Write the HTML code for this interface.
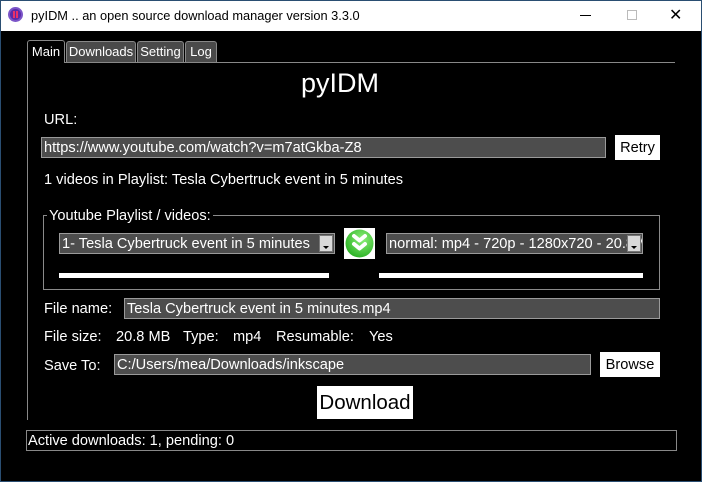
<!DOCTYPE html><html><head><style>
*{margin:0;padding:0;box-sizing:border-box}
body{width:702px;height:482px;background:#000;position:relative;overflow:hidden;font-family:"Liberation Sans",sans-serif;color:#fff;font-size:14.6px}
.a{position:absolute;white-space:nowrap}
.in{position:absolute;background:#4d4d4d;border:1px solid #9a9a9a;color:#fff;padding-left:2px;line-height:20px;font-size:14.6px;overflow:hidden;white-space:nowrap}
.btn{position:absolute;background:#fff;color:#000;text-align:center}
.tab{position:absolute;top:41px;height:21px;background:#4a4a4a;border:1px solid #888;border-bottom:none;border-radius:3px 3px 0 0;font-size:13px;line-height:20px;text-align:center;color:#fff}
.dd{position:absolute;right:1px;top:1px;width:14px;height:17px;background:#d9d9d9;border:1px solid #777}
.dd:after{content:"";position:absolute;left:3px;top:10px;border:3px solid transparent;border-top:3px solid #000}
</style></head><body>
<div class="a" style="left:0;top:0;width:702px;height:31px;background:#fff;border:1px solid #2a4e72;border-bottom:none"></div>
<div class="a" style="left:8px;top:7px;width:15px;height:15px;border-radius:50%;background:#5a2aa8;border:2px solid #7b55c8"></div>
<div class="a" style="left:13px;top:11px;width:5px;height:7px;border-left:2px solid #e8306a;border-right:2px solid #e8306a"></div>
<div class="a" style="left:31px;top:8px;color:#000;font-size:12.8px">pyIDM .. an open source download manager version 3.3.0</div>
<div class="a" style="left:580px;top:15px;width:11px;height:1px;background:#000"></div>
<div class="a" style="left:627px;top:10px;width:10px;height:10px;border:1px solid #bbb"></div>
<div class="a" style="left:669px;top:5px;color:#000;font-size:16px">✕</div>
<div class="a" style="left:701px;top:0;width:1px;height:482px;background:#2a4e72"></div>
<div class="a" style="left:0;top:481px;width:702px;height:1px;background:#2a4e72"></div>
<div class="a" style="left:0;top:0;width:1px;height:482px;background:#2a4e72"></div>

<div class="a" style="left:65px;top:62px;width:610px;height:1px;background:#888"></div>
<div class="a" style="left:27px;top:62px;width:1px;height:358px;background:#888"></div>
<div class="tab" style="left:27px;top:40px;height:23px;width:38px;background:#000;font-size:13px;line-height:21px">Main</div>
<div class="tab" style="left:66px;width:70px;font-size:13px">Downloads</div>
<div class="tab" style="left:137px;width:47px;font-size:13px">Setting</div>
<div class="tab" style="left:185px;width:32px;font-size:13px">Log</div>

<div class="a" style="left:0;width:680px;top:68px;text-align:center;font-size:27px">pyIDM</div>
<div class="a" style="left:44px;top:112px">URL:</div>
<div class="in" style="left:41px;top:137px;width:565px;height:21px">https://www.youtube.com/watch?v=m7atGkba-Z8</div>
<div class="btn" style="left:615px;top:135px;width:45px;height:25px;line-height:26px">Retry</div>
<div class="a" style="left:44px;top:172px">1 videos in Playlist: Tesla Cybertruck event in 5 minutes</div>

<div class="a" style="left:43px;top:215px;width:617px;height:75px;border:1px solid #8a8a8a"></div>
<div class="a" style="left:47px;top:208px;background:#000;padding:0 2px">Youtube Playlist / videos:</div>
<div class="in" style="left:59px;top:233px;width:276px;height:21px">1- Tesla Cybertruck event in 5 minutes<div class="dd"></div></div>
<div class="a" style="left:344px;top:228px;width:31px;height:31px;background:#fff"></div>
<svg class="a" style="left:345px;top:229px" width="29" height="29" viewBox="0 0 29 29"><defs><radialGradient id="g" cx="0.6" cy="0.35" r="0.7"><stop offset="0" stop-color="#8ef07a"/><stop offset="1" stop-color="#28b022"/></radialGradient></defs><circle cx="14.5" cy="14.5" r="14" fill="url(#g)"/><path d="M9 7 L14.5 11.5 L20 7 M9 15 L14.5 19.5 L20 15" stroke="#fff" stroke-width="4" fill="none" stroke-linecap="round" stroke-linejoin="round"/></svg>
<div class="in" style="left:386px;top:233px;width:257px;height:21px">normal: mp4 - 720p - 1280x720 - 20.8 MB<div class="dd"></div></div>
<div class="a" style="left:59px;top:273px;width:270px;height:5px;background:#fff"></div>
<div class="a" style="left:379px;top:273px;width:264px;height:5px;background:#fff"></div>

<div class="a" style="left:44px;top:301px">File name:</div>
<div class="in" style="left:124px;top:298px;width:536px;height:21px">Tesla Cybertruck event in 5 minutes.mp4</div>
<div class="a" style="left:44px;top:329px">File size:</div>
<div class="a" style="left:116px;top:329px">20.8 MB</div>
<div class="a" style="left:183px;top:329px">Type:</div>
<div class="a" style="left:233px;top:329px">mp4</div>
<div class="a" style="left:276px;top:329px">Resumable:</div>
<div class="a" style="left:369px;top:329px">Yes</div>
<div class="a" style="left:44px;top:358px">Save To:</div>
<div class="in" style="left:114px;top:354px;width:477px;height:21px">C:/Users/mea/Downloads/inkscape</div>
<div class="btn" style="left:600px;top:352px;width:60px;height:25px;line-height:26px">Browse</div>
<div class="btn" style="left:317px;top:386px;width:96px;height:33px;line-height:34px;font-size:20.5px">Download</div>

<div class="a" style="left:26px;top:430px;width:651px;height:21px;border:1px solid #888"></div>
<div class="a" style="left:28px;top:433px">Active downloads: 1, pending: 0</div>
</body></html>
